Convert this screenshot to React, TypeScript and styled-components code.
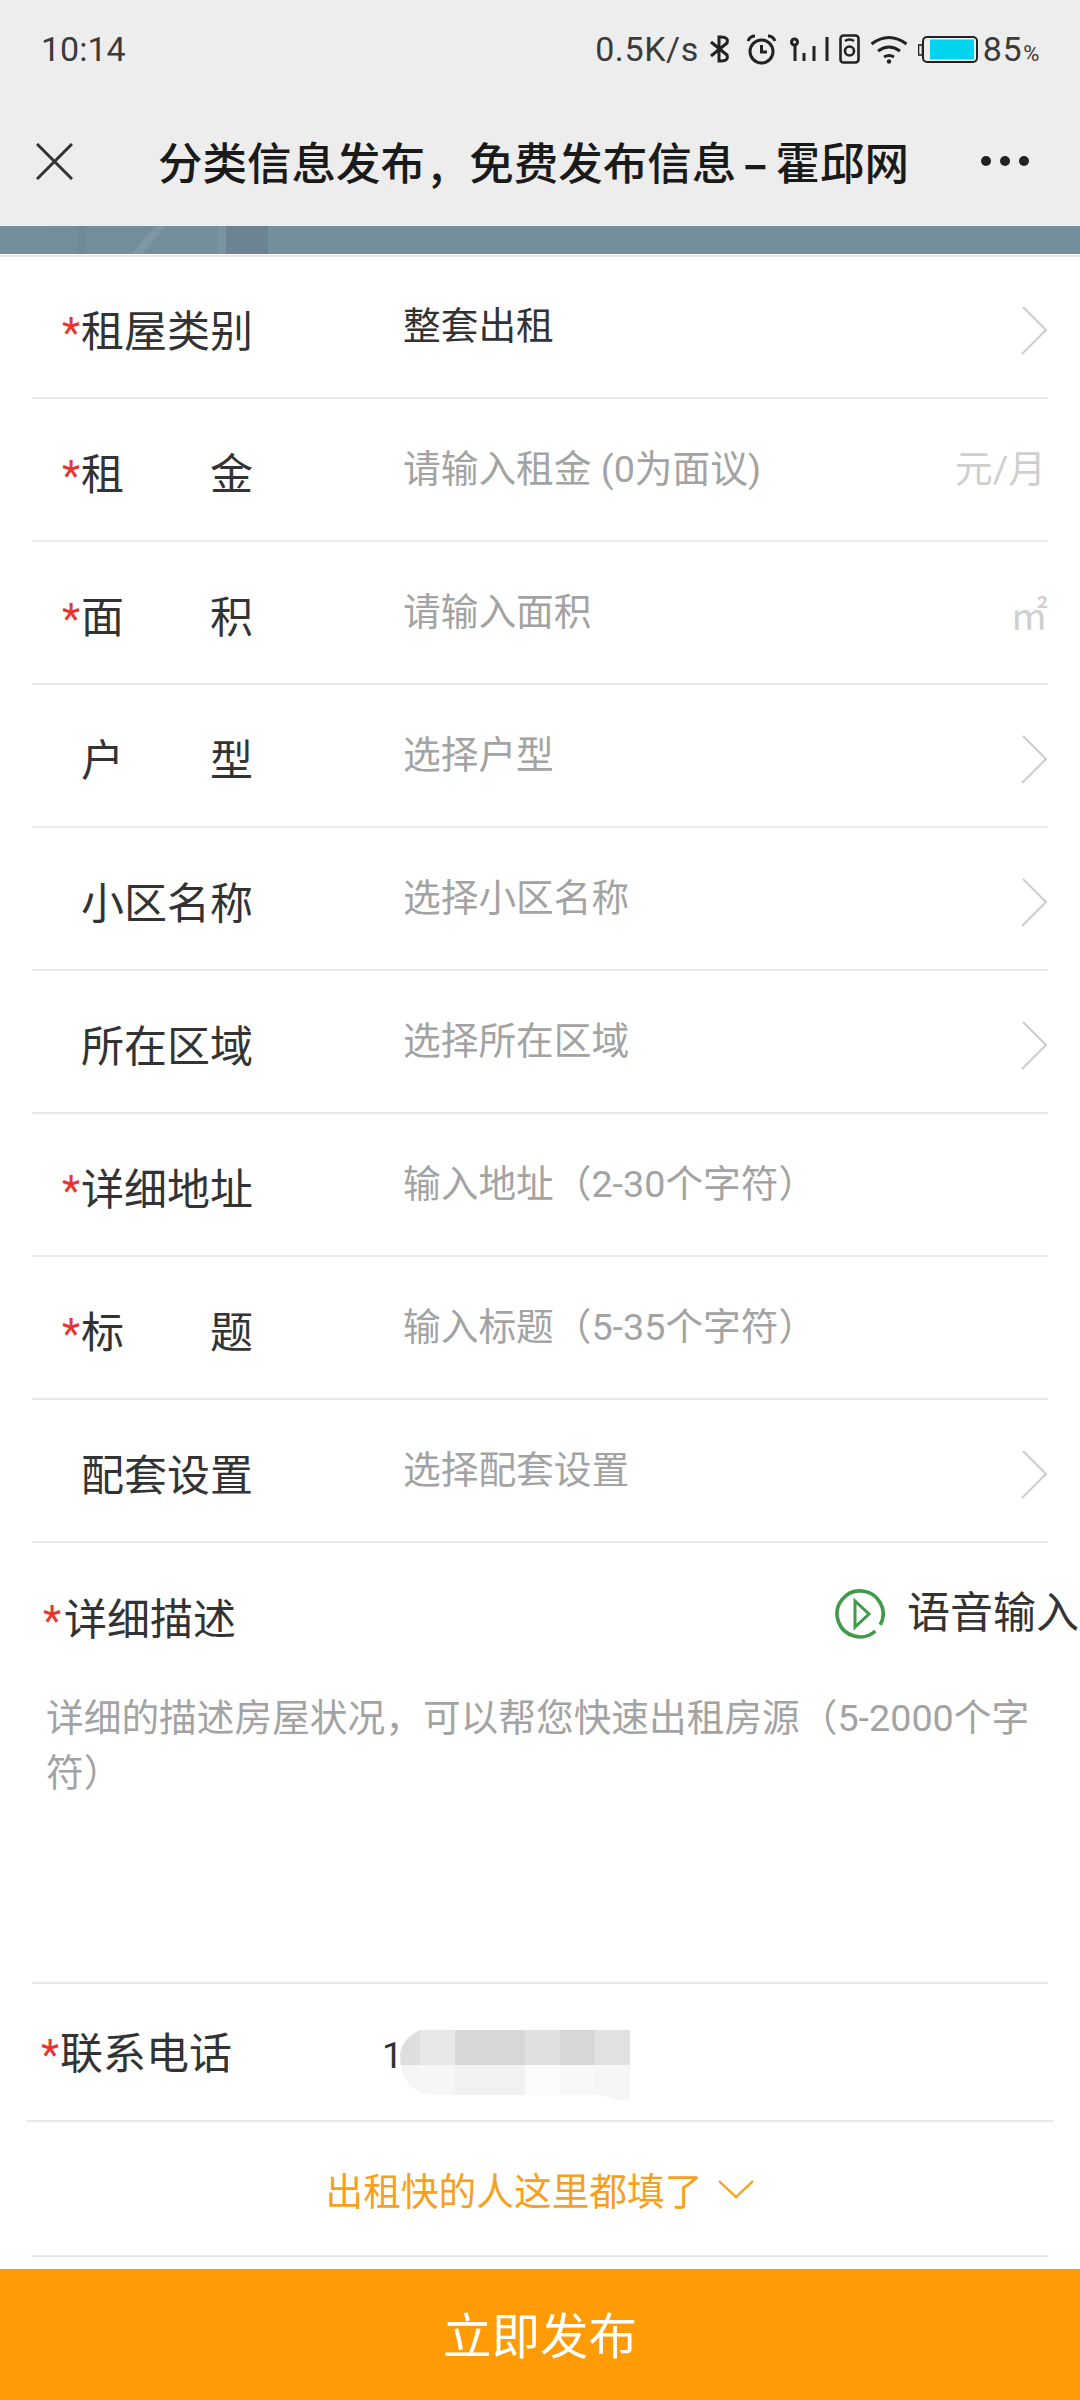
import React from "react";
import styled, { createGlobalStyle } from "styled-components";

const Global = createGlobalStyle`
  html, body { margin: 0; padding: 0; background: #fff; }
  body { font-family: "Roboto", "Noto Sans CJK SC", sans-serif; }
  * { box-sizing: border-box; }
`;

const Page = styled.div`
  width: 1080px;
  height: 2400px;
  overflow: hidden;
  display: flex;
  flex-direction: column;
  background: #fff;
`;

const Header = styled.header`
  background: #ededed;
  height: 226px;
  display: flex;
  flex-direction: column;
  flex: none;
`;

const StatusBar = styled.div`
  height: 98px;
  padding: 0 40px 0 41px;
  display: flex;
  align-items: center;
  justify-content: space-between;
  color: #3a3a3a;
`;

const Time = styled.span`
  font: 400 34px/1 "Roboto", sans-serif;
`;

const StatusGroup = styled.div`
  display: flex;
  align-items: center;
`;

const NetSpeed = styled.span`
  font: 400 34px/1 "Roboto", sans-serif;
  letter-spacing: 0.6px;
  margin-right: 10px;
`;

const StatusIcon = styled.svg<{ $gap?: number }>`
  display: block;
  flex: none;
  margin-right: ${(p) => p.$gap ?? 10}px;
`;

const Percent = styled.span`
  font: 400 34px/1 "Roboto", sans-serif;
  letter-spacing: 0.6px;
  margin-left: -5px;
  small { font-size: 22px; margin-left: 1px; }
`;

const NavBar = styled.div`
  height: 128px;
  padding: 0 50px 2px 36px;
  display: flex;
  align-items: center;
`;

const NavTitle = styled.h1`
  flex: 1;
  margin: 0 0 0 85px;
  font: 500 44.5px/1 "Noto Sans CJK SC", sans-serif;
  color: #1a1a1a;
  white-space: nowrap;
`;

const TitleComma = styled.span`
  margin: 0 26px 0 5px;
`;

const TitleDash = styled.span`
  margin: 0 8px 0 7px;
  font-weight: 700;
`;

const Banner = styled.div`
  height: 28px;
  flex: none;
  background: #748f9c;
`;

const BannerArt = styled.svg`
  display: block;
`;

const BannerEdge = styled.div`
  height: 3px;
  margin-bottom: -1px;
  flex: none;
  background: linear-gradient(#fff 0 1px, #e4e4e4 1px);
`;

const Form = styled.section`
  padding: 0 32px;
  flex: none;
`;

const Row = styled.div`
  height: 143px;
  display: flex;
  align-items: center;
  border-bottom: 2px solid #e8e8e8;
  position: relative;
`;

const Label = styled.div`
  width: 371px;
  flex: none;
  display: flex;
  align-items: baseline;
  padding-top: 8px;
  font: 400 43px/1 "Noto Sans CJK SC", sans-serif;
  color: #333;
`;

const Star = styled.span<{ $hidden?: boolean }>`
  width: 19px;
  flex: none;
  margin-left: 30px;
  color: #e8362e;
  font: 400 42px/1 "Roboto", sans-serif;
  visibility: ${(p) => (p.$hidden ? "hidden" : "visible")};
`;

const LabelText = styled.span`
  width: 172px;
  display: flex;
  justify-content: space-between;
`;

const Value = styled.div<{ $placeholder?: boolean }>`
  flex: 1;
  font: 400 37.7px/1 "Roboto", "Noto Sans CJK SC", sans-serif;
  color: ${(p) => (p.$placeholder ? "#a3a3a3" : "#333")};
  white-space: nowrap;
`;

const Unit = styled.span`
  font: 400 37.7px/1 "Roboto", "Noto Sans CJK SC", sans-serif;
  color: #cfcfcf;
  padding: 0 2px 0 0;
`;

const AreaUnit = styled(Unit)`
  padding: 0;
  font-family: "Noto Sans CJK SC", sans-serif;
`;

const Chevron = styled.svg`
  flex: none;
  display: block;
  margin: 8px 0 0 0;
`;

const DescSection = styled.section`
  height: 441px;
  margin: 0 32px;
  flex: none;
  position: relative;
  border-bottom: 2px solid #e8e8e8;
`;

const DescHead = styled.div`
  height: 148px;
  margin-right: -32px;
  display: flex;
  justify-content: space-between;
`;

const DescLabel = styled.div`
  display: flex;
  align-items: baseline;
  padding: 52px 0 0 11px;
  font: 400 43px/1 "Noto Sans CJK SC", sans-serif;
  color: #333;
`;

const DescStar = styled.span`
  width: 21px;
  color: #e8362e;
  font: 400 42px/1 "Roboto", sans-serif;
`;

const VoiceButton = styled.div`
  display: flex;
  align-items: flex-start;
  gap: 22px;
  padding: 46px 1px 0 0;
  font: 400 43px/1 "Noto Sans CJK SC", sans-serif;
  color: #333;
`;

const VoiceIcon = styled.svg`
  display: block;
`;

const VoiceText = styled.span`
  margin-top: -1px;
`;

const DescPlaceholder = styled.div`
  padding: 0 0 0 14px;
  font: 400 37.7px/55px "Roboto", "Noto Sans CJK SC", sans-serif;
  color: #a3a3a3;
`;

const PhoneRow = styled.div`
  height: 138px;
  margin: 0 27px;
  display: flex;
  align-items: center;
  border-bottom: 2px solid #e8e8e8;
  flex: none;
  position: relative;
`;

const PhoneLabel = styled.div`
  width: 355px;
  padding: 0 0 0 14px;
  display: flex;
  align-items: baseline;
  font: 400 43px/1 "Noto Sans CJK SC", sans-serif;
  color: #333;
`;

const PhoneStar = styled.span`
  width: 19px;
  color: #e8362e;
  font: 400 42px/1 "Roboto", sans-serif;
`;

const PhoneValue = styled.span`
  font: 400 37px/1 "Roboto", sans-serif;
  color: #333;
  padding-top: 6px;
`;

const Mosaic = styled.div`
  position: absolute;
  left: 373px;
  top: 46px;
  width: 230px;
  height: 70px;
  clip-path: path("M20 0 H230 V70 H215 L200 65 H32 Q0 62 0 24 Q2 8 20 0 Z");
  display: grid;
  grid-template-columns: 20px 35px 35px 35px 35px 35px 35px;
  grid-template-rows: 35px 35px;
`;

const MosaicCell = styled.i<{ $c: string }>`
  display: block;
  background: ${(p) => p.$c};
`;

const More = styled.div`
  height: 135px;
  margin: 0 32px;
  display: flex;
  align-items: center;
  justify-content: center;
  gap: 16px;
  border-bottom: 2px solid #e8e8e8;
  flex: none;
  font: 400 37.7px/1 "Noto Sans CJK SC", sans-serif;
  color: #f6a01e;
`;

const Submit = styled.button`
  display: block;
  width: 100%;
  height: 132px;
  margin-top: 12px;
  padding: 0 0 4px;
  border: 0;
  flex: none;
  background: #ff9c05;
  color: #fff;
  font: 400 48.5px/1 "Noto Sans CJK SC", sans-serif;
`;

type Field = { label: string; star?: boolean; value: string; filled?: boolean; tail?: "chev" | "rent" | "area" };

const fields: Field[] = [
  { label: "租屋类别", star: true, value: "整套出租", filled: true, tail: "chev" },
  { label: "租|金", star: true, value: "请输入租金 (0为面议)", tail: "rent" },
  { label: "面|积", star: true, value: "请输入面积", tail: "area" },
  { label: "户|型", value: "选择户型", tail: "chev" },
  { label: "小区名称", value: "选择小区名称", tail: "chev" },
  { label: "所在区域", value: "选择所在区域", tail: "chev" },
  { label: "详细地址", star: true, value: "输入地址（2-30个字符）" },
  { label: "标|题", star: true, value: "输入标题（5-35个字符）" },
  { label: "配套设置", value: "选择配套设置", tail: "chev" },
];

const mosaic = ["#dedede", "#e8e8e8", "#d8d8d8", "#d8d8d8", "#e0e0e0", "#d7d7d7", "#e2e2e2",
  "#f5f5f5", "#f6f6f6", "#f1f1f1", "#f1f1f1", "#fbfbfb", "#f8f8f8", "#f6f6f6"];

const Tail = ({ kind }: { kind?: Field["tail"] }) => {
  if (kind === "chev")
    return (
      <Chevron width="28" height="50" viewBox="0 0 28 50" fill="none" stroke="#cccccc" strokeWidth="2">
        <path d="M3 1 L26 24 L2 48" />
      </Chevron>
    );
  if (kind === "rent") return <Unit>元/月</Unit>;
  if (kind === "area") return <AreaUnit>㎡</AreaUnit>;
  return null;
};

export default function App() {
  return (
    <Page>
      <Global />
      <Header>
        <StatusBar>
          <Time>10:14</Time>
          <StatusGroup>
            <NetSpeed>0.5K/s</NetSpeed>
            <StatusIcon $gap={14} width="23" height="28" viewBox="0 0 23 28" fill="none" stroke="#222" strokeWidth="3">
              <path d="M2 7 L18 20 Q20 26 12 26 L10 26 L10 2 L12 2 Q20 2 18 8 L2 21" />
            </StatusIcon>
            <StatusIcon $gap={13} width="31" height="31" viewBox="0 0 31 31" fill="none" stroke="#222" strokeWidth="3">
              <circle cx="15.5" cy="17.5" r="11.5" />
              <path d="M15.5 11 V18 H21" />
              <path d="M2 7 Q4 2 9 2 M22 2 Q27 2 29 7" />
            </StatusIcon>
            <StatusIcon $gap={9} width="40" height="26" viewBox="0 0 40 26" fill="none" stroke="#222" strokeWidth="3">
              <circle cx="4.5" cy="6" r="3" />
              <path d="M5 10 V25 M14 17 V25 M24 10 V25 M37 1 V25" />
            </StatusIcon>
            <StatusIcon $gap={10} width="21" height="30" viewBox="0 0 21 30" fill="none" stroke="#222" strokeWidth="2.6">
              <rect x="1.5" y="1.5" width="18" height="27" rx="3" />
              <path d="M6 7 Q10.5 4 15 7" />
              <circle cx="10.5" cy="17" r="4.5" />
            </StatusIcon>
            <StatusIcon $gap={10} width="38" height="29" viewBox="0 0 38 29" fill="none" stroke="#222" strokeWidth="3">
              <path d="M1.5 9 Q19 -4 36.5 9" />
              <path d="M8 16 Q19 8 30 16" />
              <path d="M14 22 Q19 19 24 22" />
              <circle cx="19" cy="26.5" r="2.2" fill="#222" stroke="none" />
            </StatusIcon>
            <StatusIcon $gap={10} width="60" height="27" viewBox="0 0 60 27">
              <rect x="0.5" y="9" width="4" height="10" fill="none" stroke="#222" strokeWidth="1.6" />
              <rect x="5" y="1" width="54" height="25" rx="4" fill="none" stroke="#222" strokeWidth="2" />
              <rect x="12" y="3.5" width="44" height="20" fill="#00d4ee" />
            </StatusIcon>
            <Percent>85<small>%</small></Percent>
          </StatusGroup>
        </StatusBar>
        <NavBar>
          <svg width="37" height="37" viewBox="0 0 37 37" fill="none" stroke="#333" strokeWidth="3">
            <path d="M1 1 L36 36 M36 1 L1 36" />
          </svg>
          <NavTitle>
            分类信息发布<TitleComma>,</TitleComma>免费发布信息<TitleDash>–</TitleDash>霍邱网
          </NavTitle>
          <svg width="50" height="12" viewBox="0 0 50 12" fill="#222">
            <circle cx="6" cy="6" r="5" />
            <circle cx="25" cy="6" r="5" />
            <circle cx="44" cy="6" r="5" />
          </svg>
        </NavBar>
      </Header>
      <Banner>
        <BannerArt width="300" height="28" viewBox="0 0 300 28">
          <rect x="48" y="0" width="120" height="28" fill="#6f8a98" opacity="0.25" />
          <rect x="78" y="0" width="8" height="28" fill="#6a8593" opacity="0.5" />
          <path d="M155 0 H166 L142 28 H132 Z" fill="#7d97a3" />
          <rect x="226" y="0" width="42" height="28" fill="#6c8391" />
          <rect x="218" y="0" width="8" height="28" fill="#7a93a0" />
        </BannerArt>
      </Banner>
      <BannerEdge />
      <Form>
        {fields.map((f) => (
          <Row key={f.label}>
            <Label>
              <Star $hidden={!f.star}>*</Star>
              <LabelText>
                {f.label.includes("|")
                  ? f.label.split("|").map((c) => <span key={c}>{c}</span>)
                  : f.label}
              </LabelText>
            </Label>
            <Value $placeholder={!f.filled}>{f.value}</Value>
            <Tail kind={f.tail} />
          </Row>
        ))}
      </Form>
      <DescSection>
        <DescHead>
          <DescLabel>
            <DescStar>*</DescStar>详细描述
          </DescLabel>
          <VoiceButton>
            <VoiceIcon width="50" height="50" viewBox="0 0 50 50" fill="none" stroke="#3f9a4a" strokeWidth="3.6">
              <path d="M40.4 42 A23 23 0 1 1 45.3 35.8" />
              <path d="M20 12 L34 25 L20 38 Z" strokeWidth="3" />
            </VoiceIcon>
            <VoiceText>语音输入</VoiceText>
          </VoiceButton>
        </DescHead>
        <DescPlaceholder>详细的描述房屋状况，可以帮您快速出租房源（5-2000个字符）</DescPlaceholder>
      </DescSection>
      <PhoneRow>
        <PhoneLabel>
          <PhoneStar>*</PhoneStar>联系电话
        </PhoneLabel>
        <PhoneValue>1</PhoneValue>
        <Mosaic>
          {mosaic.map((c, i) => (
            <MosaicCell key={i} $c={c} />
          ))}
        </Mosaic>
      </PhoneRow>
      <More>
        <span>出租快的人这里都填了</span>
        <svg width="36" height="20" viewBox="0 0 36 20" fill="none" stroke="#f6a01e" strokeWidth="2.4">
          <path d="M1 2 L18 18 L35 2" />
        </svg>
      </More>
      <Submit>立即发布</Submit>
    </Page>
  );
}
